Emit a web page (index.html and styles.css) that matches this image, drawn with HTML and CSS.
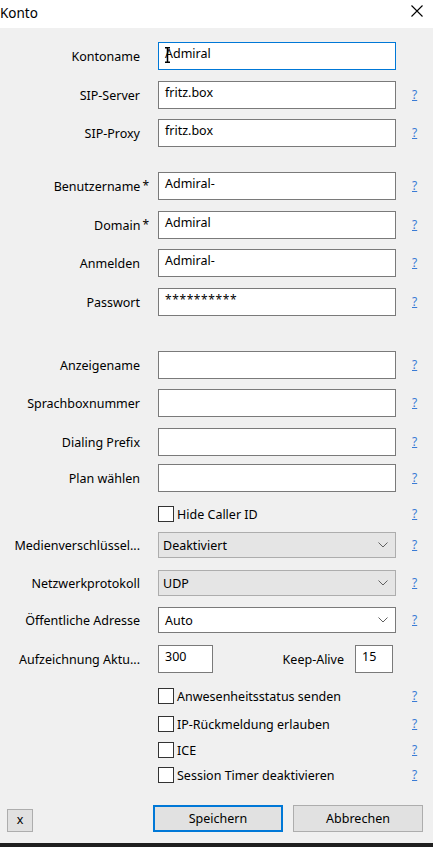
FILE: index.html
```html
<!DOCTYPE html>
<html lang="de">
<head>
<meta charset="utf-8">
<title>Konto</title>
<link rel="stylesheet" href="styles.css">
</head>
<body>
<div class="window">
  <div class="titlebar">
    <span class="title">Konto</span>
    <svg class="close" width="12" height="12" viewBox="0 0 12 12"><path d="M0.5 0.5 L11.5 11.5 M11.5 0.5 L0.5 11.5" stroke="#000" stroke-width="1.1" fill="none"/></svg>
  </div>
  <div class="body">
    <div class="form">
      <div class="lbl">Kontoname</div>
      <div class="field"><div class="tb focus">Admiral<svg class="ibeam" width="5" height="16" viewBox="0 0 5 16"><path d="M0 0.7 H5 M2.5 0.7 V15.3 M0 15.3 H5" stroke="#000" stroke-width="1.5" fill="none"/></svg></div></div>
      <div class="help"></div>

      <div class="lbl">SIP-Server</div>
      <div class="field"><div class="tb">fritz.box</div></div>
      <div class="help"><span class="q">?</span></div>

      <div class="lbl">SIP-Proxy</div>
      <div class="field"><div class="tb">fritz.box</div></div>
      <div class="help"><span class="q">?</span></div>

      <div class="lbl req">Benutzername<span class="star">*</span></div>
      <div class="field"><div class="tb">Admiral-</div></div>
      <div class="help"><span class="q">?</span></div>

      <div class="lbl req">Domain<span class="star">*</span></div>
      <div class="field"><div class="tb">Admiral</div></div>
      <div class="help"><span class="q">?</span></div>

      <div class="lbl">Anmelden</div>
      <div class="field"><div class="tb">Admiral-</div></div>
      <div class="help"><span class="q">?</span></div>

      <div class="lbl">Passwort</div>
      <div class="field"><div class="tb pw">**********</div></div>
      <div class="help"><span class="q">?</span></div>

      <div class="lbl">Anzeigename</div>
      <div class="field"><div class="tb"></div></div>
      <div class="help"><span class="q">?</span></div>

      <div class="lbl">Sprachboxnummer</div>
      <div class="field"><div class="tb"></div></div>
      <div class="help"><span class="q">?</span></div>

      <div class="lbl">Dialing Prefix</div>
      <div class="field"><div class="tb"></div></div>
      <div class="help"><span class="q">?</span></div>

      <div class="lbl">Plan wählen</div>
      <div class="field"><div class="tb"></div></div>
      <div class="help"><span class="q">?</span></div>

      <div class="field cbrow"><span class="cb"></span><span class="cbtext">Hide Caller ID</span></div>
      <div class="help cbh"><span class="q">?</span></div>

      <div class="lbl sel">Medienverschlüssel...</div>
      <div class="field"><div class="dd ro"><span>Deaktiviert</span><svg class="chev" width="10" height="6" viewBox="0 0 10 6"><path d="M0.5 0.5 L5 5 L9.5 0.5" stroke="#606060" stroke-width="1" fill="none"/></svg></div></div>
      <div class="help sel"><span class="q">?</span></div>

      <div class="lbl sel">Netzwerkprotokoll</div>
      <div class="field"><div class="dd ro"><span>UDP</span><svg class="chev" width="10" height="6" viewBox="0 0 10 6"><path d="M0.5 0.5 L5 5 L9.5 0.5" stroke="#606060" stroke-width="1" fill="none"/></svg></div></div>
      <div class="help sel"><span class="q">?</span></div>

      <div class="lbl sel">Öffentliche Adresse</div>
      <div class="field"><div class="dd ed"><span>Auto</span><svg class="chev" width="10" height="6" viewBox="0 0 10 6"><path d="M0.5 0.5 L5 5 L9.5 0.5" stroke="#606060" stroke-width="1" fill="none"/></svg></div></div>
      <div class="help sel"><span class="q">?</span></div>

      <div class="lbl">Aufzeichnung Aktu...</div>
      <div class="field split">
        <div class="tb small">300</div>
        <span class="ka">Keep-Alive</span>
        <div class="tb tiny">15</div>
      </div>
      <div class="help"></div>

      <div class="field cbrow"><span class="cb"></span><span class="cbtext">Anwesenheitsstatus senden</span></div>
      <div class="help cbh"><span class="q">?</span></div>

      <div class="field cbrow"><span class="cb"></span><span class="cbtext">IP-Rückmeldung erlauben</span></div>
      <div class="help cbh"><span class="q">?</span></div>

      <div class="field cbrow"><span class="cb"></span><span class="cbtext">ICE</span></div>
      <div class="help cbh"><span class="q">?</span></div>

      <div class="field cbrow"><span class="cb"></span><span class="cbtext">Session Timer deaktivieren</span></div>
      <div class="help cbh"><span class="q">?</span></div>
    </div>

    <div class="footer">
      <button class="btn xbtn">x</button>
      <div class="spacer"></div>
      <button class="btn main default">Speichern</button>
      <button class="btn main">Abbrechen</button>
    </div>
  </div>
  <div class="strip"></div>
</div>
</body>
</html>
```
FILE: styles.css
```css
* { box-sizing: border-box; }
html, body { margin: 0; padding: 0; }
body {
  width: 433px;
  height: 847px;
  overflow: hidden;
  font-family: "Noto Sans", "Open Sans", sans-serif;
  font-size: 12.5px;
  color: #000;
  background: #f0f0f0;
}
.window {
  width: 433px;
  height: 847px;
  display: flex;
  flex-direction: column;
}
.titlebar {
  height: 28px;
  flex: none;
  background: #fff;
  display: flex;
  align-items: center;
  justify-content: space-between;
  padding: 0 10px 0 0;
}
.title { font-size: 13.5px; margin-top: -3px; }
.close { display: block; margin-top: -6px; }
.body {
  flex: 1;
  display: flex;
  flex-direction: column;
  background: #f0f0f0;
}
.form {
  margin-top: 14px;
  display: grid;
  grid-template-columns: 158px 238px 37px;
  grid-template-rows: 39px 38px 53px 39px 38px 39px 63px 38px 39px 36px 42px 26px 38px 37px 38px 43px 28px 26px 25px 26px;
  align-items: start;
}
.lbl {
  grid-column: 1;
  height: 28px;
  display: flex;
  align-items: center;
  justify-content: flex-end;
  padding-right: 18px;
  white-space: nowrap;
}
.lbl.req { padding-right: 9px; }
.star { margin-left: 2px; font-size: 12px; position: relative; top: -1px; }
.lbl.sel { height: 26px; }
.field { grid-column: 2; }
.help {
  grid-column: 3;
  height: 28px;
  display: flex;
  align-items: center;
  padding-left: 16px;
}
.help.sel { height: 26px; }
.help.cbh { height: 16px; }
.q {
  color: #3a7bd5;
  text-decoration: underline;
  font-size: 12px;
  line-height: 1;
}
.tb {
  position: relative;
  height: 28px;
  background: #fff;
  border: 1px solid #7a7a7a;
  padding: 2px 6px 0;
  line-height: 18px;
  white-space: nowrap;
}
.tb.focus { border-color: #0078d7; }
.tb.pw { font-size: 12px; letter-spacing: 0.6px; }
.ibeam { position: absolute; left: 6px; top: 4px; }
.dd {
  height: 26px;
  display: flex;
  align-items: center;
  justify-content: space-between;
  padding: 0 7px 0 4px;
}
.dd.ro { background: #e5e5e5; border: 1px solid #adadad; }
.dd.ed { background: #fff; border: 1px solid #7a7a7a; padding-left: 6px; }
.chev { display: block; }
.split { display: flex; align-items: center; }
.tb.small { width: 55px; }
.ka { flex: 1; text-align: right; margin-right: 11px; }
.tb.tiny { width: 38px; margin-right: 3px; }
.cbrow {
  height: 16px;
  display: flex;
  align-items: center;
  white-space: nowrap;
}
.cb {
  width: 16px;
  height: 16px;
  flex: none;
  border: 1px solid #333;
  background: #fff;
  margin-right: 3px;
}
.footer {
  margin-top: auto;
  display: flex;
  align-items: flex-end;
  padding: 0 10px 11px 7px;
  gap: 10px;
}
.spacer { flex: 1; }
.btn {
  font-family: inherit;
  font-size: 12.5px;
  color: #000;
  background: #e1e1e1;
  border: 1px solid #adadad;
  padding: 0;
  margin: 0;
}
.xbtn { width: 26px; height: 23px; line-height: 1; }
.main { width: 130px; height: 27px; }
.default { border: 2px solid #0078d7; }
.strip { height: 4px; flex: none; background: #1f1f1f; }
```
